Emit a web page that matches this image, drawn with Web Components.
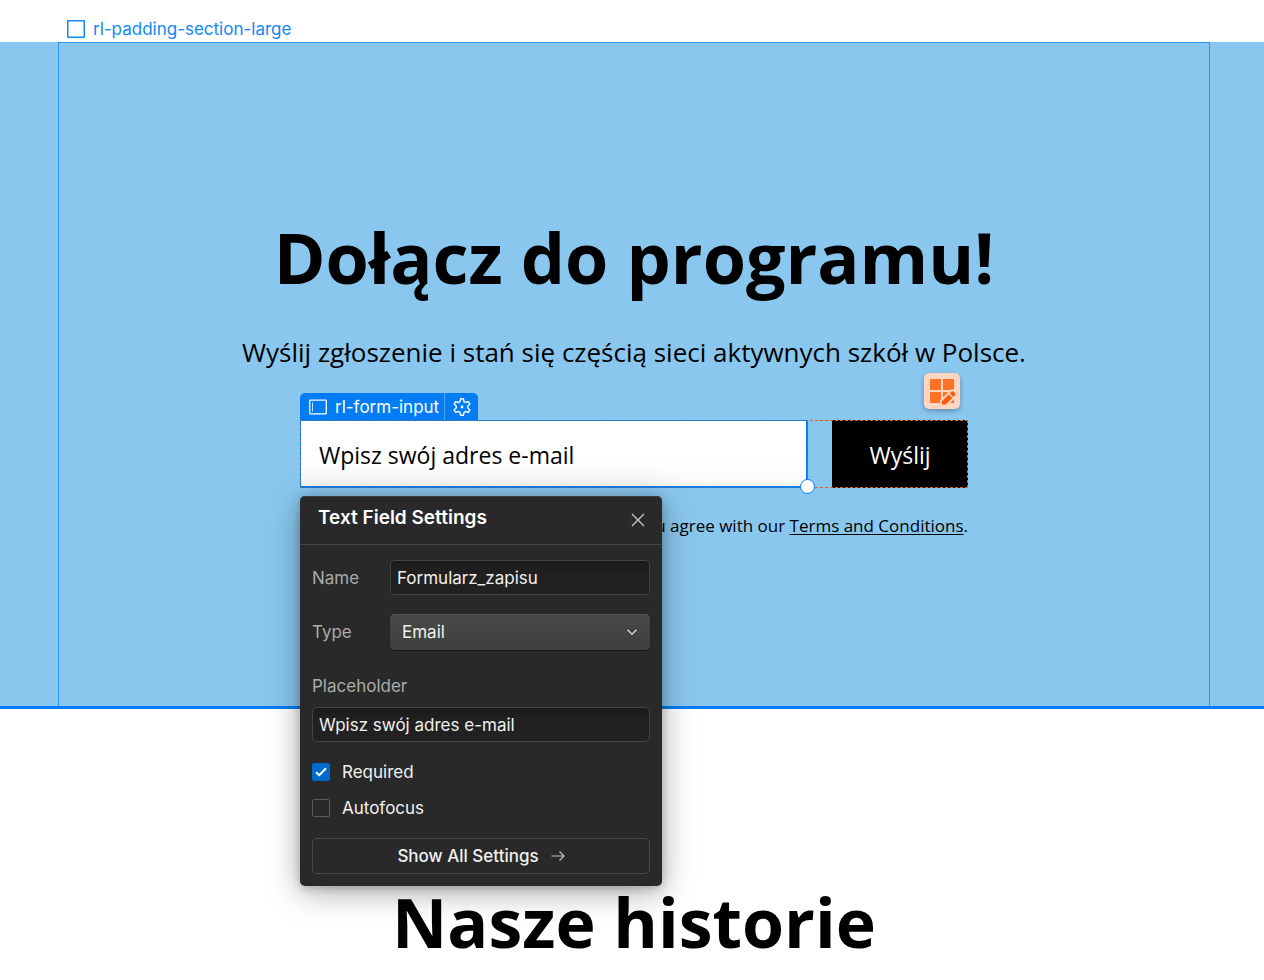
<!DOCTYPE html>
<html lang="pl">
<head>
<meta charset="utf-8">
<meta name="viewport" content="width=device-width, initial-scale=1">
<title>Dołącz do programu!</title>
<style>
  body {
    margin: 0;
    background: #fff;
    color: #000;
    font-family: "Open Sans", "Noto Sans", sans-serif;
    --accent: #007df4;
    --ui-font: Inter, "Liberation Sans", sans-serif;
  }
</style>
</head>
<body>
<uc-canvas>
  <uc-section tag="rl-padding-section-large">
    <h1 slot="title">Dołącz do programu!</h1>
    <p slot="text">Wyślij zgłoszenie i stań się częścią sieci aktywnych szkół w Polsce.</p>
    <uc-signup-form>
      <uc-element-badge slot="badge">rl-form-input</uc-element-badge>
      <uc-settings-panel slot="panel">
        <span slot="title">Text Field Settings</span>
        <uc-text-field label="Name" value="Formularz_zapisu"></uc-text-field>
        <uc-select-field label="Type" options="Email,Plain,Password,Phone,Number"></uc-select-field>
        <uc-text-field stacked label="Placeholder" value="Wpisz swój adres e-mail"></uc-text-field>
        <uc-check-field checked label="Required"></uc-check-field>
        <uc-check-field label="Autofocus"></uc-check-field>
      </uc-settings-panel>
    </uc-signup-form>
  </uc-section>
  <uc-stories><h2>Nasze historie</h2></uc-stories>
</uc-canvas>

<script>
class Canvas extends HTMLElement {
  constructor() {
    super();
    this.attachShadow({ mode: 'open' });
    this.shadowRoot.innerHTML = `
      <style>
        :host {
          display: block;
        }
      </style>
      <slot></slot>
    `;
  }
}

class Section extends HTMLElement {
  constructor() {
    super();
    this.attachShadow({ mode: 'open' });
    this.shadowRoot.innerHTML = `
      <style>
        :host {
          display: block;
        }

        #tag {
          display: flex;
          align-items: center;
          gap: 8px;
          height: 26px;
          padding: 16px 0 0 67px;
          color: #1188f6;
          font: 17px/26px var(--ui-font);
        }

        #area {
          padding: 0 54px 0 58px;
          background: #8ac7ef;
          border-bottom: 3px solid var(--accent);
        }

        #inner {
          display: flex;
          flex-direction: column;
          align-items: center;
          padding: 171px 24px 166px;
          border: 1px solid #2b93f3;
          border-bottom: 0;
          text-align: center;
        }

        ::slotted(h1) {
          margin: 0 0 32px;
          font-size: 70px;
          line-height: 86px;
          font-weight: 700;
        }

        ::slotted(p) {
          margin: 0 0 48px;
          font-size: 26px;
          line-height: 40px;
        }
      </style>
      <div id="tag">
        <svg width="18" height="18" viewBox="0 0 18 18" fill="none" stroke="currentColor" stroke-width="1.5">
          <rect x="0.75" y="0.75" width="16.5" height="16.5" rx="0.5"/>
        </svg>
        <span></span>
      </div>
      <div id="area">
        <div id="inner">
          <slot name="title"></slot>
          <slot name="text"></slot>
          <slot></slot>
        </div>
      </div>
    `;
    this.shadowRoot.querySelector('#tag span').textContent = this.getAttribute('tag');
  }
}

class SignupForm extends HTMLElement {
  constructor() {
    super();
    this.attachShadow({ mode: 'open' });
    this.shadowRoot.innerHTML = `
      <style>
        :host {
          display: block;
          width: 100%;
          max-width: 668px;
        }

        form {
          position: relative;
          display: grid;
          grid-template-columns: 1fr 136px;
          gap: 24px;
          margin: 0;
        }

        /* dashed frame over the whole component */
        #frame {
          position: absolute;
          inset: 0;
          border: 1px dashed #d9661f;
          pointer-events: none;
        }

        /* above the frame, so the selection covers it */
        #field {
          position: relative;
          z-index: 1;
          display: flex;
        }

        #field input {
          flex: 1;
          min-width: 0;
          box-sizing: border-box;
          height: 68px;
          padding: 2px 18px 0;
          border: 1px solid var(--accent);
          border-right-width: 2px;
          border-bottom-width: 2px;
          border-radius: 0;
          background: linear-gradient(#fff 60%, #f7f7f7);
          color: #000;
          font: inherit;
          font-size: 23px;
          outline: 1px dashed rgba(120,120,120,0.6);
          outline-offset: -1px;
        }

        #field input::placeholder {
          color: #000;
          opacity: 1;
        }

        #handle {
          position: absolute;
          right: -7px;
          bottom: -6px;
          z-index: 2;
          width: 13px;
          height: 13px;
          border: 1px solid var(--accent);
          border-radius: 50%;
          background: #fff;
        }

        #submit {
          border: 0;
          padding: 2px 0 0;
          background: #000;
          color: #fff;
          font: inherit;
          font-size: 23px;
        }

        #edit {
          position: absolute;
          right: 8px;
          top: -47px;
          display: grid;
          place-items: center;
          width: 36px;
          height: 36px;
          padding: 0;
          border: 0;
          border-radius: 5px;
          background: #fdd5c0;
          box-shadow: 0 2px 5px rgba(0,0,0,0.3);
        }

        slot[name="badge"]::slotted(*) {
          position: absolute;
          left: 0;
          bottom: 100%;
        }

        slot[name="panel"]::slotted(*) {
          position: absolute;
          left: 0;
          top: 76px;
          z-index: 10;
        }

        #terms {
          margin: 24px 0 0;
          text-align: right;
          font-size: 17px;
          line-height: 28px;
        }

        #terms a {
          color: inherit;
          text-decoration-thickness: 1px;
          text-underline-offset: 2px;
        }
      </style>
      <form>
        <div id="field">
          <input type="email" aria-label="E-mail" placeholder="Wpisz swój adres e-mail">
          <slot name="badge"></slot>
          <div id="handle"></div>
          <slot name="panel"></slot>
        </div>
        <button id="submit" type="button">Wyślij</button>
        <div id="frame"></div>
        <button id="edit" type="button" aria-label="Edit component">
          <svg width="28" height="28" viewBox="0 0 28 28">
            <path fill="#fb7224" d="M2 2h11v11H2zM15 2h11v11H15zM2 15h11v11H2zM15 15h11v11H15z"/>
            <path fill="#fb5a0c" stroke="#fdd5c0" stroke-width="2" d="M13 28.500v-4.700L22.500 14.300q2-2 4 0l1 1q2 2 0 4L18.200 28.500z"/>
            <path stroke="#fdd5c0" stroke-width="1.500" d="M20.800 16.500l5 5"/>
          </svg>
        </button>
      </form>
      <p id="terms">you agree with our <a href="#terms">Terms and Conditions</a>.</p>
    `;
  }
}

class ElementBadge extends HTMLElement {
  constructor() {
    super();
    this.attachShadow({ mode: 'open' });
    this.shadowRoot.innerHTML = `
      <style>
        :host {
          display: flex;
          height: 27px;
          border-radius: 5px 5px 0 0;
          background: var(--accent);
          color: #fff;
          font: 17px/26px var(--ui-font);
          white-space: nowrap;
        }

        #name {
          display: flex;
          align-items: center;
          gap: 8px;
          padding: 0 5px 0 9px;
          border-right: 1px solid #4da4f7;
        }

        button {
          display: grid;
          place-items: center;
          width: 33px;
          padding: 0;
          border: 0;
          background: none;
          color: inherit;
        }
      </style>
      <div id="name">
        <svg width="18" height="16" viewBox="0 0 18 16" fill="none" stroke="currentColor">
          <rect x="0.700" y="1.200" width="16.600" height="13.600" rx="0.500" stroke-width="1.300"/>
          <path d="M3.500 3.500v9" opacity="0.800"/>
        </svg>
        <slot></slot>
      </div>
      <button type="button" aria-label="Settings">
        <svg width="18" height="18" viewBox="0 0 18 18" fill="none" stroke="currentColor" stroke-width="1.400" stroke-linejoin="round">
          <path d="M7.700 0.800h2.600l.8 2.900 1.400.8 2.900-.8 1.500 2.400-2.200 2.200v1.400l2.200 2.200-1.500 2.400-2.900-.8-1.400.8-.8 2.900H7.700l-.8-2.900-1.400-.8-2.900.8-1.500-2.400 2.200-2.200V8.300L1.100 6.100l1.500-2.400 2.900.8 1.400-.8z"/>
          <circle cx="9" cy="9" r="1.400" fill="currentColor" stroke="none"/>
        </svg>
      </button>
    `;
  }
}

class SettingsPanel extends HTMLElement {
  constructor() {
    super();
    this.attachShadow({ mode: 'open' });
    this.shadowRoot.innerHTML = `
      <style>
        :host {
          display: block;
          width: 362px;
          border-radius: 5px;
          background: #292929;
          box-shadow: 0 6px 32px rgba(0,0,0,0.35), 0 2px 8px rgba(0,0,0,0.2), inset 0 1px 0 #3d3d3d;
          color: #f0f0f0;
          font: 17px/24px var(--ui-font);
          text-align: left;
        }

        header {
          display: flex;
          align-items: center;
          justify-content: space-between;
          height: 48px;
          padding: 0 16px 0 18px;
          border-bottom: 1px solid #454545;
        }

        h2 {
          margin: 0;
          padding-bottom: 4px;
          color: #fff;
          font-size: 19px;
          line-height: 24px;
          font-weight: 600;
        }

        #close {
          display: grid;
          padding: 0;
          border: 0;
          background: none;
          color: #c4c4c4;
        }

        #main {
          display: flex;
          flex-direction: column;
          padding: 15px 12px 12px;
        }

        #all {
          display: flex;
          align-items: center;
          justify-content: center;
          gap: 12px;
          box-sizing: border-box;
          height: 36px;
          margin-top: 12px;
          border: 1px solid #484848;
          border-radius: 5px;
          background: none;
          color: inherit;
          font: inherit;
          font-weight: 500;
        }
      </style>
      <header>
        <h2><slot name="title"></slot></h2>
        <button id="close" type="button" aria-label="Close">
          <svg width="16" height="16" viewBox="0 0 16 16" fill="none" stroke="currentColor" stroke-width="1.400">
            <path d="M2 2l12 12M14 2L2 14"/>
          </svg>
        </button>
      </header>
      <div id="main">
        <slot></slot>
        <button id="all" type="button">
          Show All Settings
          <svg width="14" height="12" viewBox="0 0 14 12" fill="none" stroke="#c4c4c4" stroke-width="1.200">
            <path d="M0.500 6h12.500M8.500 1.500L13 6l-4.500 4.500"/>
          </svg>
        </button>
      </div>
    `;
  }
}

class TextField extends HTMLElement {
  constructor() {
    super();
    this.attachShadow({ mode: 'open' });
    this.shadowRoot.innerHTML = `
      <style>
        :host {
          display: grid;
          grid-template-columns: 78px 1fr;
          align-items: center;
          margin-bottom: 19px;
        }

        :host([stacked]) {
          grid-template-columns: 1fr;
          gap: 9px;
          margin-bottom: 12px;
        }

        label {
          color: #ababab;
        }

        input {
          width: 100%;
          min-width: 0;
          box-sizing: border-box;
          height: 35px;
          padding: 0 6px;
          border: 1px solid #454545;
          border-radius: 5px;
          background: linear-gradient(#1a1a1a, #212121 40%);
          color: #f0f0f0;
          font: inherit;
          outline: none;
        }
      </style>
      <label for="control"></label>
      <input id="control" type="text">
    `;
    this.shadowRoot.querySelector('label').textContent = this.getAttribute('label');
    this.shadowRoot.querySelector('input').value = this.getAttribute('value');
  }
}

class SelectField extends HTMLElement {
  constructor() {
    super();
    this.attachShadow({ mode: 'open' });
    this.shadowRoot.innerHTML = `
      <style>
        :host {
          display: grid;
          grid-template-columns: 78px 1fr;
          align-items: center;
          margin-bottom: 24px;
        }

        label {
          color: #ababab;
        }

        #box {
          display: grid;
          align-items: center;
        }

        #box > * {
          grid-area: 1 / 1;
        }

        select {
          appearance: none;
          width: 100%;
          height: 36px;
          padding: 0 32px 0 12px;
          border: 0;
          border-radius: 5px;
          background: linear-gradient(#484848, #404040);
          box-shadow: 0 1px 1px #151515, inset 0 1px 0 #555;
          color: #f0f0f0;
          font: inherit;
          outline: none;
        }

        svg {
          justify-self: end;
          margin-right: 12px;
          pointer-events: none;
        }
      </style>
      <label for="control"></label>
      <div id="box">
        <select id="control"></select>
        <svg width="12" height="8" viewBox="0 0 12 8" fill="none" stroke="#d0d0d0" stroke-width="1.500">
          <path d="M1.500 1.700L6 6.200l4.500-4.500"/>
        </svg>
      </div>
    `;
    this.shadowRoot.querySelector('label').textContent = this.getAttribute('label');
    const select = this.shadowRoot.querySelector('select');
    this.getAttribute('options').split(',').forEach((name) => {
      select.add(new Option(name));
    });
  }
}

class CheckField extends HTMLElement {
  constructor() {
    super();
    this.attachShadow({ mode: 'open' });
    this.shadowRoot.innerHTML = `
      <style>
        :host {
          display: block;
        }

        label {
          display: flex;
          align-items: center;
          gap: 12px;
          height: 36px;
        }

        #box {
          display: grid;
          place-items: center;
        }

        #box > * {
          grid-area: 1 / 1;
        }

        input {
          appearance: none;
          box-sizing: border-box;
          width: 18px;
          height: 18px;
          margin: 0;
          border: 1px solid #5a5a5a;
          border-radius: 2px;
        }

        input:checked {
          border-color: #006acc;
          background: #006acc;
        }

        svg {
          display: none;
          pointer-events: none;
        }

        input:checked + svg {
          display: block;
        }
      </style>
      <label>
        <span id="box">
          <input type="checkbox">
          <svg width="12" height="10" viewBox="0 0 12 10" fill="none" stroke="#fff" stroke-width="2">
            <path d="M1 5.200l3.300 3L11 1.200"/>
          </svg>
        </span>
        <span id="text"></span>
      </label>
    `;
    this.shadowRoot.querySelector('#text').textContent = this.getAttribute('label');
    this.shadowRoot.querySelector('input').checked = this.hasAttribute('checked');
  }
}

class Stories extends HTMLElement {
  constructor() {
    super();
    this.attachShadow({ mode: 'open' });
    this.shadowRoot.innerHTML = `
      <style>
        :host {
          display: block;
          padding: 170px 54px 14px 58px;
          text-align: center;
        }

        ::slotted(h2) {
          margin: 0;
          font-size: 68px;
          line-height: 86px;
          font-weight: 700;
        }
      </style>
      <slot></slot>
    `;
  }
}

customElements.define('uc-canvas', Canvas);
customElements.define('uc-section', Section);
customElements.define('uc-signup-form', SignupForm);
customElements.define('uc-element-badge', ElementBadge);
customElements.define('uc-settings-panel', SettingsPanel);
customElements.define('uc-text-field', TextField);
customElements.define('uc-select-field', SelectField);
customElements.define('uc-check-field', CheckField);
customElements.define('uc-stories', Stories);
</script>
</body>
</html>
